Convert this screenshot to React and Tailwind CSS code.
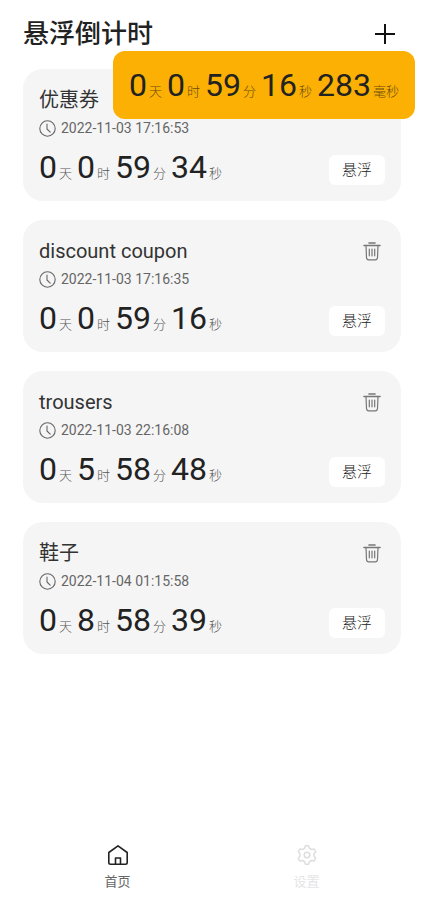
import { useState } from 'react';

const FONT = "font-[Roboto,'Noto_Sans_CJK_SC',sans-serif]";

const TIMERS = [
    { id: 1, title: '优惠券', date: '2022-11-03 17:16:53', left: [0, 0, 59, 34] },
    { id: 2, title: 'discount coupon', date: '2022-11-03 17:16:35', left: [0, 0, 59, 16] },
    { id: 3, title: 'trousers', date: '2022-11-03 22:16:08', left: [0, 5, 58, 48] },
    { id: 4, title: '鞋子', date: '2022-11-04 01:15:58', left: [0, 8, 58, 39] },
];

const UNITS = ['天', '时', '分', '秒', '毫秒'];

function PlusIcon() {
    return (
        <svg width="20" height="20" viewBox="0 0 20 20" fill="none" stroke="#111" strokeWidth="2">
            <path d="M10 0v20M0 10h20" />
        </svg>
    );
}

function ClockIcon() {
    return (
        <svg width="17" height="17" viewBox="0 0 17 17" fill="none" stroke="#666" strokeWidth="1.1"
            strokeLinecap="round" strokeLinejoin="round">
            <circle cx="8.5" cy="8.5" r="7.7" />
            <path d="M8 4v5l3.2 3.2" />
        </svg>
    );
}

function TrashIcon() {
    return (
        <svg width="18" height="20" viewBox="0 0 18 20" fill="none" stroke="#777" strokeWidth="1.2"
            strokeLinecap="round" strokeLinejoin="round">
            <path d="M1 4.5h16" strokeWidth="1.6" />
            <path d="M6 2h6" strokeWidth="1.6" />
            <path d="M3 5l.5 11.5q.2 2.300 2.200 2.300h6.600q2 0 2.200-2.300L15 5" />
            <path d="M6.300 8v6.800M9 8v6.800M11.700 8v6.800" />
        </svg>
    );
}

function HomeIcon() {
    return (
        <svg width="22" height="22" viewBox="0 0 22 22" fill="none" stroke="#222" strokeWidth="1.6"
            strokeLinejoin="round">
            <path d="M1.800 8.500L11 1.800l9.200 6.700v10q0 1.700-1.700 1.700h-15q-1.700 0-1.700-1.700z" />
            <path d="M8.500 20v-6h5v6" />
        </svg>
    );
}

function GearIcon() {
    return (
        <svg width="22" height="22" viewBox="0 0 22 22" fill="none" stroke="#ddd" strokeWidth="1.5"
            strokeLinejoin="round">
            <path d="M9.500 1.800h3l1 2.600 1.900 1.100 2.800-.5 1.500 2.600-1.700 2.300v2.200l1.700 2.300-1.500 2.600-2.800-.5-1.900 1.100-1 2.600h-3l-1-2.600-1.900-1.100-2.800.5-1.500-2.600L4 12.100V9.900L2.300 7.600 3.800 5l2.800.5 1.900-1.100z" />
            <circle cx="11" cy="11" r="2.800" />
        </svg>
    );
}

function Countdown({ values, unitClass }) {
    return (
        <div className="flex items-baseline gap-[5px] whitespace-nowrap">
            {values.map((value, i) => (
                <span key={UNITS[i]} className="flex items-baseline gap-0.5">
                    <span className="text-[32px] leading-9 text-[#222]">{value}</span>
                    <span className={`text-[13px] leading-4 font-light ${unitClass}`}>{UNITS[i]}</span>
                </span>
            ))}
        </div>
    );
}

function TimerCard({ timer, onFloat, onDelete }) {
    return (
        <li className="flex flex-col rounded-[20px] bg-[#f5f5f5] px-4 pt-[17px] pb-4">
            <div className="flex items-center justify-between">
                <h2 className="text-xl leading-7 text-[#333]">{timer.title}</h2>
                <button type="button" aria-label="删除" onClick={onDelete} className="mr-1 cursor-pointer">
                    <TrashIcon />
                </button>
            </div>
            <div className="mt-1 flex items-center gap-[5px]">
                <ClockIcon />
                <time className="text-sm leading-5 text-[#666]">{timer.date}</time>
            </div>
            <div className="mt-[11px] flex items-start justify-between">
                <Countdown values={timer.left} unitClass="text-[#555]" />
                <button type="button" onClick={onFloat}
                    className="mt-1.5 h-[30px] w-14 cursor-pointer rounded-md bg-white text-[15px] font-light text-[#222]">
                    悬浮
                </button>
            </div>
        </li>
    );
}

export default function App() {
    const [timers, setTimers] = useState(TIMERS);
    const [floating, setFloating] = useState([0, 0, 59, 16, 283]);

    return (
        <div className={`flex min-h-screen flex-col bg-white ${FONT}`}>
            {/* Header */}
            <header className="flex items-center justify-between pt-3.5 pr-[29px] pl-[23px]">
                <h1 className="text-[26px] leading-10 font-medium text-[#222]">悬浮倒计时</h1>
                <button type="button" aria-label="添加" className="cursor-pointer">
                    <PlusIcon />
                </button>
            </header>

            {/* Timers */}
            <main className="flex-1 px-[23px] pt-[15px]">
                <ul className="flex flex-col gap-[19px]">
                    {timers.map((timer) => (
                        <TimerCard
                            key={timer.id}
                            timer={timer}
                            onFloat={() => setFloating([...timer.left, 0])}
                            onDelete={() => setTimers(timers.filter((t) => t.id !== timer.id))}
                        />
                    ))}
                </ul>
            </main>

            {/* Bottom navigation */}
            <nav className="flex px-[23px] pb-2">
                <a href="#home" className="flex flex-1 flex-col items-center gap-1.5 text-[13px] leading-5 text-[#666]">
                    <HomeIcon />
                    首页
                </a>
                <a href="#settings" className="flex flex-1 flex-col items-center gap-1.5 text-[13px] leading-5 text-[#e5e5e5]">
                    <GearIcon />
                    设置
                </a>
            </nav>

            {/* Floating countdown */}
            <div className="absolute top-[51px] right-[9px] rounded-xl bg-[#fbb003] px-4 py-4">
                <Countdown values={floating} unitClass="text-[#6b4d0c]" />
            </div>
        </div>
    );
}
